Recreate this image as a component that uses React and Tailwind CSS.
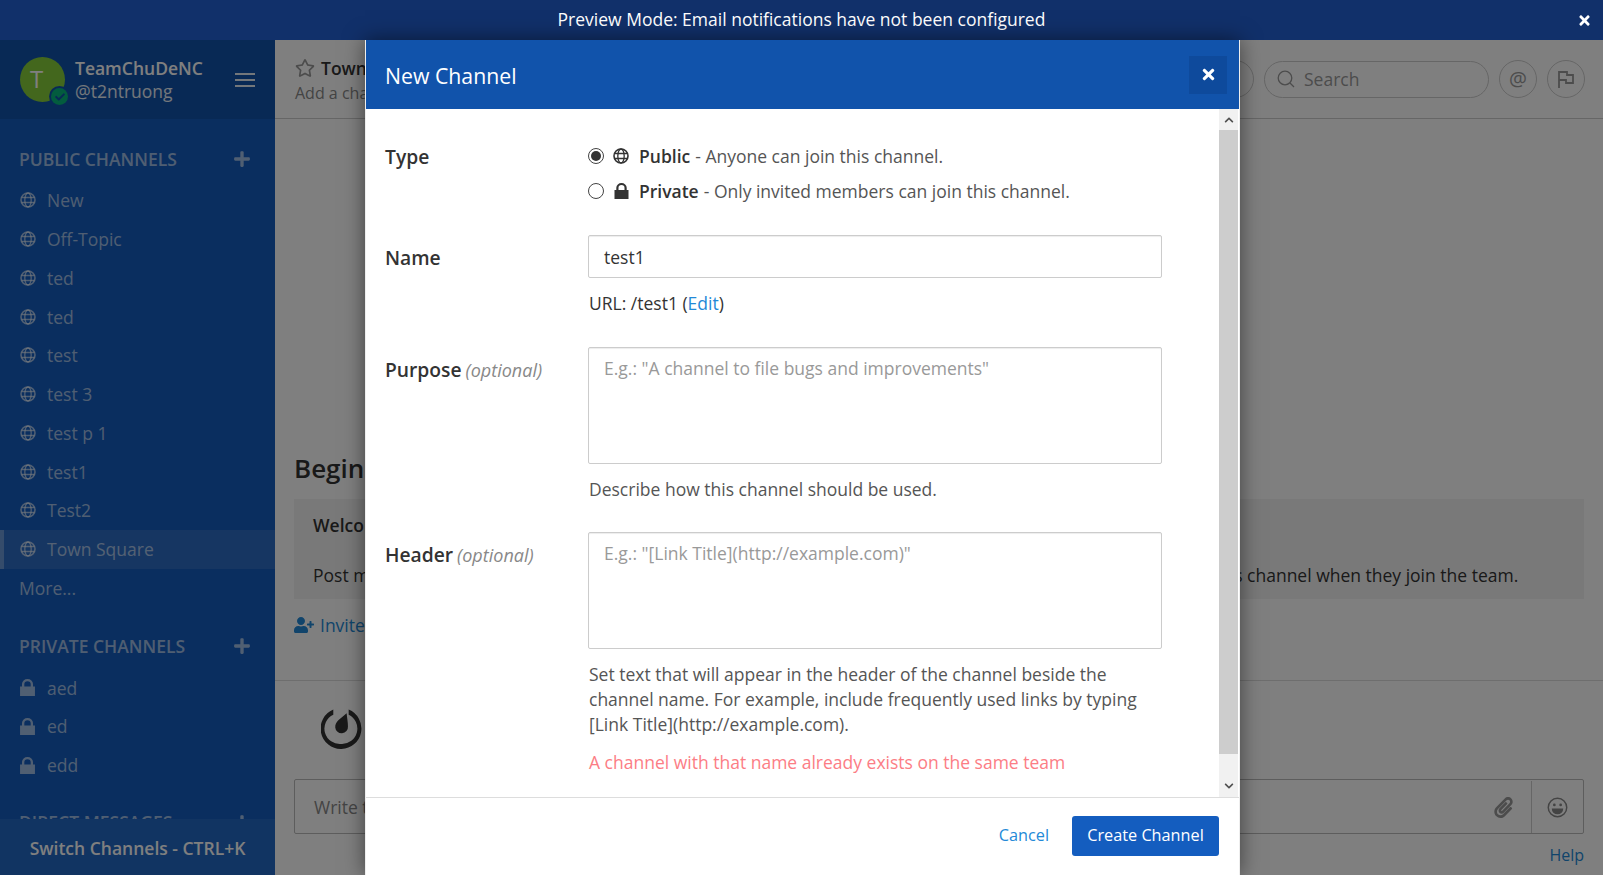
import React from 'react'
import { FaRegStar, FaUserPlus, FaPaperclip, FaPlus, FaTimes, FaCheck, FaChevronUp, FaChevronDown } from 'react-icons/fa'

const PUBLIC_CHANNELS = ['New', 'Off-Topic', 'ted', 'ted', 'test', 'test 3', 'test p 1', 'test1', 'Test2', 'Town Square']
const PRIVATE_CHANNELS = ['aed', 'ed', 'edd']

function Globe({ className }) {
  return (
    <svg viewBox="0 0 16 16" className={className} fill="none" stroke="currentColor" strokeWidth="1.6">
      <circle cx="8" cy="8" r="7" />
      <ellipse cx="8" cy="8" rx="3.2" ry="7" strokeWidth="1.3" />
      <path d="M1.5 5.5h13M1.5 10.5h13" strokeWidth="1.3" />
    </svg>
  )
}

function Lock({ className }) {
  return (
    <svg viewBox="0 0 14 16" className={className} fill="currentColor">
      <path d="M0 7h1.800V4.800a5.200 4.800 0 0 1 10.400 0V7H14v9H0zM4 7h6V4.800a3 2.800 0 0 0-6 0z" />
    </svg>
  )
}

function SectionHeading({ label }) {
  return (
    <div className="flex items-center justify-between h-[24px] pl-[19px] pr-[24px]">
      <span className="text-[17.5px] font-semibold uppercase text-white/60">{label}</span>
      <FaPlus className="w-[18px] h-[18px] text-white/60" />
    </div>
  )
}

function ChannelRow({ name, icon, active }) {
  return (
    <div className={`flex items-center h-[38.75px] text-[17.5px] text-white/60 ${active ? 'bg-white/10 border-l-[4px] border-white/30 pl-[16px]' : 'pl-[20px]'}`}>
      {icon === 'lock'
        ? <Lock className="w-[15px] h-[17px] shrink-0 mr-[12px]" />
        : <Globe className="w-[16px] h-[16px] shrink-0 mr-[11px]" />}
      <span>{name}</span>
    </div>
  )
}

function Sidebar() {
  return (
    <div className="w-[275px] shrink-0 h-full flex flex-col bg-[#145dbf]">
      <div className="h-[79px] shrink-0 bg-[#1153ab] flex items-center pl-[20px] pr-[20px] relative">
        <div className="relative w-[45px] h-[45px] rounded-full bg-[#86cf3a] flex items-center justify-center text-white text-[24px] pr-[12px] pb-[2px] shrink-0">
          T
          <div className="absolute right-[-5px] bottom-[-5px] w-[21px] h-[21px] rounded-full bg-[#1153ab] flex items-center justify-center">
            <div className="w-[17px] h-[17px] rounded-full bg-[#06b87d] flex items-center justify-center">
              <FaCheck className="w-[10px] h-[10px] text-[#1153ab]" />
            </div>
          </div>
        </div>
        <div className="ml-[10px] flex-1 text-white leading-[23px]">
          <div className="text-[17.5px] font-semibold">TeamChuDeNC</div>
          <div className="text-[17.5px] opacity-90">@t2ntruong</div>
        </div>
        <div className="flex flex-col gap-[4px]">
          <div className="w-[20px] h-[2px] bg-white/90" />
          <div className="w-[20px] h-[2px] bg-white/90" />
          <div className="w-[20px] h-[2px] bg-white/90" />
        </div>
      </div>
      <div className="flex-1 min-h-0 overflow-hidden pt-[28px]">
        <SectionHeading label="Public Channels" />
        <div className="mt-[10px]">
          {PUBLIC_CHANNELS.map((c, i) => <ChannelRow key={i} name={c} active={c === 'Town Square'} />)}
          <div className="flex items-center h-[38.75px] pl-[19px] text-[17.5px] text-white/60">More...</div>
        </div>
        <div className="mt-[27px]"><SectionHeading label="Private Channels" /></div>
        <div className="mt-[10px]">
          {PRIVATE_CHANNELS.map(c => <ChannelRow key={c} name={c} icon="lock" />)}
        </div>
        <div className="mt-[26px]"><SectionHeading label="Direct Messages" /></div>
      </div>
      <div className="h-[56px] shrink-0 bg-[#2268c4] flex items-center justify-center text-white text-[17.5px] font-semibold pt-[2px]">
        Switch Channels - CTRL+K
      </div>
    </div>
  )
}

function MainChannel() {
  return (
    <div className="flex-1 min-w-0 h-full flex flex-col bg-white text-[#333]">
      <div className="h-[79px] shrink-0 border-b border-[#ccc] flex items-center pl-[20px] pr-[18px]">
        <div className="flex-1 min-w-0 pt-[3px]">
          <div className="flex items-center text-[17.5px] font-semibold leading-[24px]">
            <FaRegStar className="w-[20px] h-[20px] mr-[6px] text-[#999]" />
            Town Square
          </div>
          <div className="text-[16px] text-[#888] leading-[24px] mt-[1px]">Add a channel header</div>
        </div>
        <div className="w-[38px] h-[38px] rounded-full border border-[#ccc] mr-[10px]" />
        <div className="w-[225px] h-[37px] rounded-full border border-[#ccc] flex items-center pl-[12px] text-[17.5px] text-[#999]">
          <svg viewBox="0 0 18 18" className="w-[18px] h-[18px] mr-[9px]" fill="none" stroke="#999" strokeWidth="1.3">
            <circle cx="8" cy="8" r="6.800" />
            <path d="M13 13l4 4" />
          </svg>
          Search
        </div>
        <div className="w-[38px] h-[38px] rounded-full border border-[#ccc] ml-[10px] flex items-center justify-center text-[20px] text-[#999]">@</div>
        <div className="w-[38px] h-[38px] rounded-full border border-[#ccc] ml-[10px] flex items-center justify-center">
          <svg viewBox="0 0 18 18" className="w-[18px] h-[18px]" fill="none" stroke="#999" strokeWidth="1.8">
            <path d="M2 18V2h8v3h6v8H9v-3H2" />
          </svg>
        </div>
      </div>
      <div className="flex-1 min-h-0 flex flex-col justify-end px-[19px]">
        <div className="text-[26px] font-semibold leading-[32px]">Beginning of Town Square</div>
        <div className="mt-[15px] h-[100px] bg-[#f2f2f2] px-[19px] pt-[14px]">
          <div className="text-[17.5px] font-semibold leading-[24px]">Welcome to Town Square!</div>
          <div className="text-[17.5px] leading-[24px] mt-[26px] whitespace-nowrap">Post messages here that you want everyone to see. Everyone automatically becomes a permanent member of this channel when they join the team.</div>
        </div>
        <div className="mt-[14px] mb-[43px] flex items-center text-[17.5px] text-[#2389d7] leading-[24px]">
          <FaUserPlus className="w-[20px] h-[20px] mr-[6px]" />
          Invite others to this channel
        </div>
      </div>
      <div className="h-[195px] shrink-0 border-t border-[#ddd] px-[19px] flex flex-col">
        <div className="h-[98px] pl-[27px] pt-[27px] shrink-0">
          <svg viewBox="0 0 40 40" className="w-[41px] h-[41px]" fill="#333">
            <path d="M27 1.500A20 20 0 0 1 20 40 20 20 0 0 1 12 1.500v5a15 15 0 0 0 8 28.500 15 15 0 0 0 7-28.500z" />
            <path d="M25 5c.4 4 1.300 9 1.300 13a6.200 6.200 0 0 1-12.400 1c-.2-3 1.200-5 3-7z" />
          </svg>
        </div>
        <div className="h-[55px] shrink-0 border border-[#bbb] rounded-[2px] flex items-center pl-[19px] pt-[1px] text-[17.5px] text-[#888]">
          <span className="flex-1">Write to Town Square</span>
          <FaPaperclip className="w-[21px] h-[21px] text-[#999] mr-[17px]" />
          <div className="w-[52px] h-full border-l border-[#ccc] flex items-center justify-center">
            <svg viewBox="0 0 20 20" className="w-[21px] h-[21px]" fill="none" stroke="#888" strokeWidth="1.400">
              <circle cx="10" cy="10" r="8.800" />
              <circle cx="7" cy="7.500" r="1.300" fill="#888" stroke="none" />
              <circle cx="13" cy="7.500" r="1.300" fill="#888" stroke="none" />
              <path d="M4.500 11h11a5.500 5.500 0 0 1-11 0z" fill="#888" stroke="none" />
            </svg>
          </div>
        </div>
        <div className="text-right text-[16px] text-[#2389d7] mt-[9px] leading-[24px]">Help</div>
      </div>
    </div>
  )
}

function Row({ label, optional, children, className, labelClass }) {
  return (
    <div className={`flex ${className}`}>
      <div className={`w-[203px] shrink-0 text-[19.25px] font-semibold text-[#333] leading-[24px] ${labelClass || ''}`}>
        {label}
        {optional && <span className="ml-[4px] text-[18px] font-normal italic text-[#888]">(optional)</span>}
      </div>
      <div className="w-[574px] shrink-0">{children}</div>
    </div>
  )
}

function NewChannelModal() {
  return (
    <div className="absolute inset-x-0 top-[40px] bottom-0 bg-black/50">
      <div className="ml-[365px] w-[875px] h-full bg-white border-x border-[#eee] flex flex-col shadow-[0_0_20px_rgba(0,0,0,0.5)] text-[#333] text-[17.5px]">
        <div className="h-[69px] shrink-0 bg-[#1153ab] flex items-center justify-between pl-[19px] pr-[12px] text-white">
          <span className="text-[21.25px] pt-[2px]">New Channel</span>
          <div className="w-[38px] h-[38px] bg-[#0e4a9c] flex items-center justify-center">
            <FaTimes className="w-[17px] h-[17px]" />
          </div>
        </div>
        <div className="flex-1 min-h-0 flex">
          <div className="flex-1 min-w-0 pl-[19px] pt-[35px] leading-[24px]">
            <Row label="Type" className="h-[91px]" labelClass="pt-[1px]">
              <div className="flex items-center h-[24px]">
                <div className="w-[16px] h-[16px] rounded-full border border-[#444] flex items-center justify-center mr-[9px]">
                  <div className="w-[10px] h-[10px] rounded-full bg-[#333]" />
                </div>
                <Globe className="w-[16px] h-[16px] mr-[10px] text-[#333]" />
                <span className="font-semibold">Public</span>
                <span className="ml-[5px] text-[#555]">- Anyone can join this channel.</span>
              </div>
              <div className="flex items-center h-[24px] mt-[11px]">
                <div className="w-[16px] h-[16px] rounded-full border border-[#444] mr-[10px]" />
                <Lock className="w-[15px] h-[16px] mr-[10px] text-[#333]" />
                <span className="font-semibold">Private</span>
                <span className="ml-[5px] text-[#555]">- Only invited members can join this channel.</span>
              </div>
            </Row>
            <Row label="Name" className="h-[112px] pt-[11px]">
              <div className="-mt-[11px] h-[43px] border border-[#ccc] rounded-[2px] px-[15px] flex items-center shadow-[inset_0_1px_1px_rgba(0,0,0,0.075)]">test1</div>
              <div className="mt-[13px] ml-[1px]">URL: /test1 (<span className="text-[#2389d7]">Edit</span>)</div>
            </Row>
            <Row label="Purpose" optional className="h-[185px] pt-[11px]">
              <div className="-mt-[11px] h-[117px] border border-[#ccc] rounded-[2px] px-[15px] pt-[8px] text-[#999] shadow-[inset_0_1px_1px_rgba(0,0,0,0.075)]">E.g.: "A channel to file bugs and improvements"</div>
              <div className="mt-[13px] ml-[1px] text-[#555]">Describe how this channel should be used.</div>
            </Row>
            <Row label="Header" optional className="pt-[11px]">
              <div className="-mt-[11px] h-[117px] border border-[#ccc] rounded-[2px] px-[15px] pt-[8px] text-[#999] shadow-[inset_0_1px_1px_rgba(0,0,0,0.075)]">E.g.: "[Link Title](http://example.com)"</div>
              <div className="mt-[13px] ml-[1px] text-[#555] leading-[25px]">Set text that will appear in the header of the channel beside the channel name. For example, include frequently used links by typing [Link Title](http://example.com).</div>
              <div className="mt-[13px] ml-[1px] text-[#fc7d85]">A channel with that name already exists on the same team</div>
            </Row>
          </div>
          <div className="w-[19px] shrink-0 mr-[1px] flex flex-col bg-[#f1f1f1]">
            <div className="h-[21px] flex items-center justify-center">
              <FaChevronUp className="w-[10px] h-[10px] text-[#505050]" />
            </div>
            <div className="flex-1 bg-[#cdcdcd]" />
            <div className="h-[43px] flex items-end justify-center pb-[6px]">
              <FaChevronDown className="w-[10px] h-[10px] text-[#505050]" />
            </div>
          </div>
        </div>
        <div className="h-[78px] shrink-0 border-t border-[#ddd] flex items-center justify-end pr-[20px] pb-[2px] text-[16.25px]">
          <span className="text-[#2389d7] mr-[23px]">Cancel</span>
          <div className="w-[147px] h-[40px] rounded-[3px] bg-[#145dbf] text-white flex items-center justify-center">Create Channel</div>
        </div>
      </div>
    </div>
  )
}

export default function App() {
  return (
    <div className="relative h-[875px] w-[1603px] overflow-hidden font-['Open_Sans',sans-serif]">
      <div className="h-[40px] bg-[#11306a] text-white text-[17.5px] flex items-center justify-center relative pb-[2px]">
        Preview Mode: Email notifications have not been configured
        <FaTimes className="absolute right-[11px] top-[13px] w-[15px] h-[15px]" />
      </div>
      <div className="h-[835px] flex">
        <Sidebar />
        <MainChannel />
      </div>
      <NewChannelModal />
    </div>
  )
}
